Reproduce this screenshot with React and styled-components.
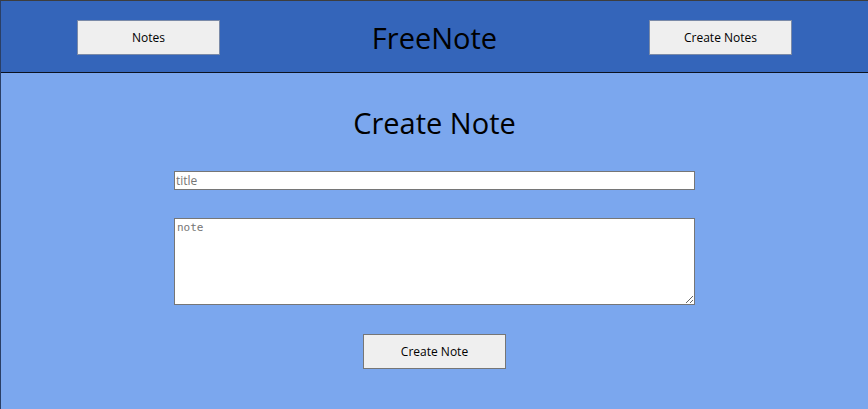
import React from 'react'
import styled, { createGlobalStyle } from 'styled-components'

const GlobalStyle = createGlobalStyle`
    html, body {
        margin: 0;
        padding: 0;
        height: 100%;
        background: #7ba7ee;
        font-family: "Open Sans", "Liberation Sans", sans-serif;
    }
    #root {
        min-height: 100%;
    }
`

const Page = styled.div`
    min-height: 409px;
    box-sizing: border-box;
    border-top: 1px solid #3d3d3d;
    border-left: 1px solid #2a3f66;
    background: #7ba7ee;
`

const Header = styled.header`
    height: 72px;
    box-sizing: border-box;
    display: flex;
    align-items: center;
    justify-content: space-between;
    padding: 2px 76px 0 76px;
    background: #3465ba;
    border-bottom: 1px solid #0b1220;
`

const Brand = styled.h1`
    margin: 0;
    font-size: 29px;
    font-weight: 400;
    color: #000;
    line-height: 36px;
`

const NavButton = styled.button`
    width: 143px;
    height: 35px;
    box-sizing: border-box;
    background: #efefef;
    border: 1px solid #7a8aa8;
    font-family: "Open Sans", "Liberation Sans", sans-serif;
    font-size: 12px;
    color: #000;
    cursor: pointer;
    padding: 0;
`

const Main = styled.main`
    display: flex;
    flex-direction: column;
    align-items: center;
    padding-top: 30px;
`

const Heading = styled.h2`
    margin: 0 0 28px 0;
    font-size: 29px;
    font-weight: 400;
    line-height: 40px;
    color: #000;
`

const Form = styled.form`
    display: flex;
    flex-direction: column;
    align-items: center;
    width: 521px;
`

const TitleInput = styled.input`
    width: 100%;
    height: 19px;
    box-sizing: border-box;
    border: 1px solid #767676;
    padding: 0 1px;
    font-family: "Open Sans", "Liberation Sans", sans-serif;
    font-size: 12px;
    background: #fff;
    outline: none;
    &::placeholder {
        color: #757575;
    }
`

const NoteArea = styled.textarea`
    width: 100%;
    height: 87px;
    box-sizing: border-box;
    margin-top: 28px;
    border: 1px solid #767676;
    padding: 2px;
    font-family: "DejaVu Sans Mono", "Liberation Mono", monospace;
    font-size: 11px;
    background: #fff;
    outline: none;
    &::placeholder {
        color: #757575;
    }
`

const SubmitButton = styled(NavButton)`
    margin-top: 29px;
    border-color: #767676;
`

export default function App() {
    return (
        <>
            <GlobalStyle />
            <Page>
                <Header>
                    <NavButton>Notes</NavButton>
                    <Brand>FreeNote</Brand>
                    <NavButton>Create Notes</NavButton>
                </Header>
                <Main>
                    <Heading>Create Note</Heading>
                    <Form onSubmit={e => e.preventDefault()}>
                        <TitleInput placeholder="title" />
                        <NoteArea placeholder="note" />
                        <SubmitButton type="submit">Create Note</SubmitButton>
                    </Form>
                </Main>
            </Page>
        </>
    )
}
